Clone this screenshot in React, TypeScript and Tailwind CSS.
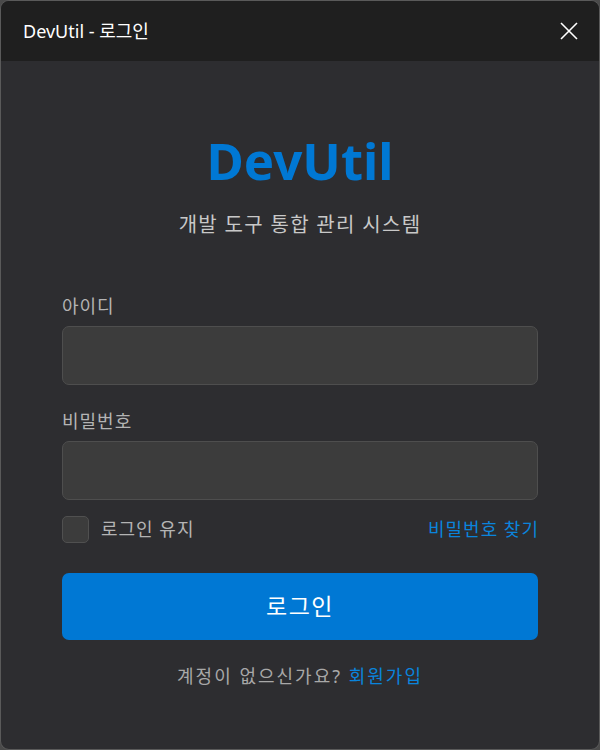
import React from "react";

const font = { fontFamily: '"Noto Sans", "Noto Sans CJK KR", sans-serif' };

export default function App() {
  return (
    <div className="w-[600px] h-[750px] bg-[#4a4a4a]" style={font}>
      <div className="w-full h-full rounded-[9px] border border-[#5a5a5a] bg-[#2d2d30] overflow-hidden flex flex-col">
        <div className="h-[60px] bg-[#1f1f1f] flex items-center justify-between pl-[22px] pr-[20px] shrink-0">
          <span className="text-[18px] text-white">DevUtil - 로그인</span>
          <svg width="20" height="20" viewBox="0 0 20 20" className="text-white">
            <path d="M2 2 L18 18 M18 2 L2 18" stroke="currentColor" strokeWidth="1.6" />
          </svg>
        </div>
        <div className="flex flex-col px-[61px]">
          <div className="mt-[64px] text-center text-[#0078d4] font-bold text-[51px] leading-[70px]">DevUtil</div>
          <div className="mt-[16px] text-center text-[#c8c8c8] text-[20px] leading-[28px] tracking-[1.3px]">개발 도구 통합 관리 시스템</div>

          <div className="mt-[55px] text-[18px] text-[#b4b4b4] leading-[24px] tracking-[1px]">아이디</div>
          <div className="mt-[8px] h-[59px] rounded-[7px] bg-[#3c3c3c] border border-[#4e4e4e]"></div>

          <div className="mt-[24px] text-[18px] text-[#b4b4b4] leading-[24px] tracking-[1px]">비밀번호</div>
          <div className="mt-[8px] h-[59px] rounded-[7px] bg-[#3c3c3c] border border-[#4e4e4e]"></div>

          <div className="mt-[16px] flex items-center justify-between h-[26px]">
            <div className="flex items-center">
              <div className="w-[27px] h-[27px] rounded-[5px] bg-[#3c3c3c] border border-[#505050]"></div>
              <span className="ml-[12px] text-[18px] text-[#b4b4b4] tracking-[1px]">로그인 유지</span>
            </div>
            <span className="text-[18px] text-[#0a84dc] tracking-[1px] -mr-[1px]">비밀번호 찾기</span>
          </div>

          <div className="mt-[31px] h-[67px] rounded-[7px] bg-[#0078d4] flex items-center justify-center text-white text-[23px] tracking-[1.5px]">로그인</div>

          <div className="mt-[23px] text-center text-[18px] leading-[26px] text-[#a8a8a8] tracking-[2px]">
            계정이 없으신가요? <span className="text-[#0a84dc]">회원가입</span>
          </div>
        </div>
      </div>
    </div>
  );
}
